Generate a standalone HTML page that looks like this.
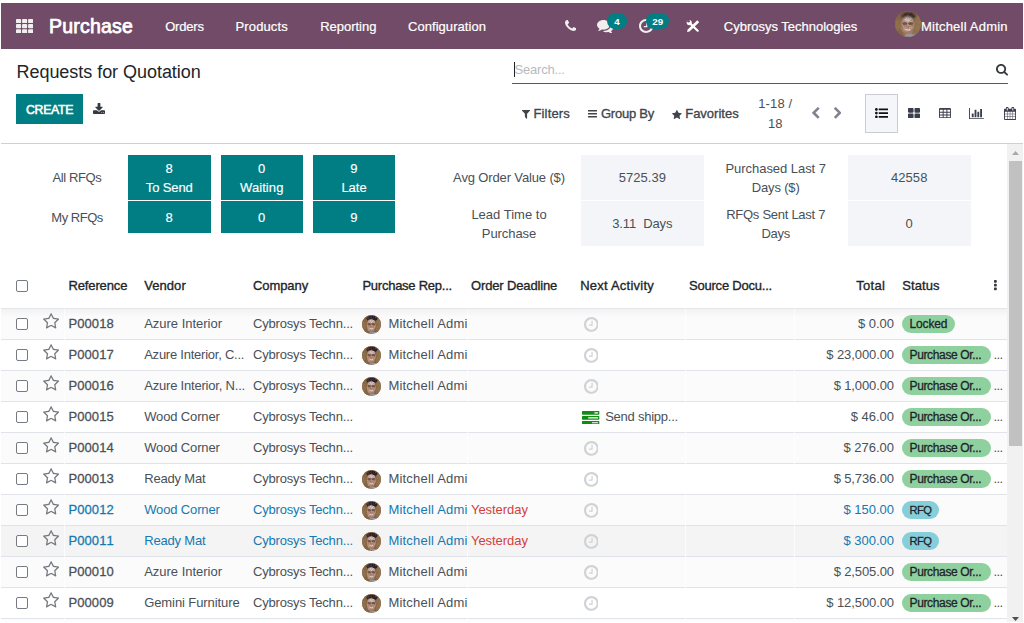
<!DOCTYPE html>
<html lang="en"><head><meta charset="utf-8"><title>Odoo - Requests for Quotation</title>
<style>

html,body{margin:0;padding:0;background:#fff;}
body{position:relative;width:1024px;height:623px;overflow:hidden;font-family:"Liberation Sans",sans-serif;font-size:13px;color:#495057;}
header,nav,main,section,article,aside{display:block;position:static;margin:0;padding:0;height:0;}
div,span,svg{position:absolute;display:block;}
span{white-space:pre;}

</style></head>
<body>
<header class="o_main_navbar">
<div style="left:1px;top:3px;width:1022px;height:46px;background:#714b67;"></div>
<svg style="left:16px;top:18.8px" width="17.2" height="14.3" viewBox="0 0 17.2 14.3" fill="#f1eef0"><rect x="0.00" y="0.00" width="5.1" height="4.1" rx="0.9"/><rect x="6.05" y="0.00" width="5.1" height="4.1" rx="0.9"/><rect x="12.10" y="0.00" width="5.1" height="4.1" rx="0.9"/><rect x="0.00" y="5.10" width="5.1" height="4.1" rx="0.9"/><rect x="6.05" y="5.10" width="5.1" height="4.1" rx="0.9"/><rect x="12.10" y="5.10" width="5.1" height="4.1" rx="0.9"/><rect x="0.00" y="10.20" width="5.1" height="4.1" rx="0.9"/><rect x="6.05" y="10.20" width="5.1" height="4.1" rx="0.9"/><rect x="12.10" y="10.20" width="5.1" height="4.1" rx="0.9"/></svg>
<span style="left:49.00px;top:13px;font-size:19.5px;line-height:26px;color:#fff;letter-spacing:0.217px;-webkit-text-stroke:0.75px;">Purchase</span>
<span style="left:165.20px;top:17px;font-size:13px;line-height:19px;color:#fff;letter-spacing:-0.193px;-webkit-text-stroke:0.2px;">Orders</span>
<span style="left:235.60px;top:17px;font-size:13px;line-height:19px;color:#fff;letter-spacing:0.107px;-webkit-text-stroke:0.2px;">Products</span>
<span style="left:320.20px;top:17px;font-size:13px;line-height:19px;color:#fff;letter-spacing:-0.016px;-webkit-text-stroke:0.2px;">Reporting</span>
<span style="left:408.00px;top:17px;font-size:13px;line-height:19px;color:#fff;letter-spacing:0.049px;-webkit-text-stroke:0.2px;">Configuration</span>
<svg style="left:564.8px;top:20.4px;" width="11.40" height="11.00" viewBox="0 -1408 1408 1408" preserveAspectRatio="none"><path transform="scale(1,-1)" fill="#f1eef0" d="M1408 296C1408 303 1408 310 1405 317C1398 338 1349 360 1329 370C1272 402 1214 433 1158 466C1132 482 1100 512 1069 512C1008 512 919 331 865 331C838 331 803 356 779 370C597 471 471 597 370 779C356 803 331 838 331 865C331 919 512 1008 512 1069C512 1100 482 1132 466 1158C433 1214 402 1272 370 1329C360 1349 338 1398 317 1405C310 1408 303 1408 296 1408C260 1408 190 1392 157 1377C108 1356 76 1300 51 1255C19 1196 0 1136 0 1069C0 976 38 892 69 807C91 746 118 687 152 632C257 462 462 257 632 152C687 118 746 91 807 69C892 38 976 0 1069 0C1136 0 1196 19 1255 51C1300 76 1356 108 1377 157C1392 190 1408 260 1408 296Z"/></svg>
<svg style="left:596.8px;top:19.8px;" width="16.40" height="13.40" viewBox="0 -1280 1792 1408" preserveAspectRatio="none"><path transform="scale(1,-1)" fill="#f1eef0" d="M1408 768C1408 1051 1093 1280 704 1280C315 1280 0 1051 0 768C0 606 104 461 266 367C232 284 188 245 149 201C138 188 125 176 129 157C129 157 129 157 129 157C132 140 146 128 161 128C162 128 163 128 164 128C194 132 223 137 250 144C351 170 445 213 528 272C584 262 643 256 704 256C1093 256 1408 485 1408 768ZM1792 512C1792 679 1682 827 1513 920C1528 871 1536 820 1536 768C1536 589 1444 424 1277 302C1122 190 919 128 704 128C675 128 645 130 616 132C741 50 907 0 1088 0C1149 0 1208 6 1264 16C1347 -43 1441 -86 1542 -112C1569 -119 1598 -124 1628 -128C1644 -130 1659 -117 1663 -99C1663 -99 1663 -99 1663 -99C1667 -80 1654 -68 1643 -55C1604 -11 1560 28 1526 111C1688 205 1792 349 1792 512Z"/></svg>
<div style="left:607px;top:13px;width:20px;height:16px;border-radius:8px;background:#017e84"></div>
<span style="left:614.25px;top:14px;font-size:9.75px;line-height:15px;color:#fff;letter-spacing:0.463px;font-weight:700;">4</span>
<svg style="left:638.8px;top:19.4px;" width="14.40" height="14.00" viewBox="0 -1408 1536 1536" preserveAspectRatio="none"><path transform="scale(1,-1)" fill="#f1eef0" d="M896 992C896 1010 882 1024 864 1024H800C782 1024 768 1010 768 992V640H544C526 640 512 626 512 608V544C512 526 526 512 544 512H864C882 512 896 526 896 544ZM1312 640C1312 340 1068 96 768 96C468 96 224 340 224 640C224 940 468 1184 768 1184C1068 1184 1312 940 1312 640ZM1536 640C1536 1064 1192 1408 768 1408C344 1408 0 1064 0 640C0 216 344 -128 768 -128C1192 -128 1536 216 1536 640Z"/></svg>
<div style="left:646.3px;top:13px;width:22.7px;height:16px;border-radius:8px;background:#017e84"></div>
<span style="left:652.30px;top:14px;font-size:9.75px;line-height:15px;color:#fff;letter-spacing:0.070px;font-weight:700;">29</span>
<svg style="left:686px;top:19px" width="14" height="14" viewBox="0 0 14 14"><path d="M3.7 4.1 L11.7 11.7" stroke="#fff" stroke-width="2.2" stroke-linecap="round" fill="none"/><circle cx="3.2" cy="3.6" r="2.55" fill="#fff"/><circle cx="2.5" cy="2.2" r="1.35" fill="#714b67"/><path d="M1.1 12.9 L1.7 10.6 L11.3 1.3 L13.2 3.2 L3.5 12.4 Z" fill="#fff"/></svg>
<span style="left:723.80px;top:17px;font-size:13px;line-height:19px;color:#fff;letter-spacing:-0.004px;-webkit-text-stroke:0.2px;">Cybrosys Technologies</span>
<svg style="left:895px;top:11px" width="26" height="26" viewBox="0 0 26 26"><defs><clipPath id="avn"><circle cx="13" cy="13" r="13"/></clipPath><filter id="favn" x="-30%" y="-30%" width="160%" height="160%"><feGaussianBlur stdDeviation="1"/></filter><filter id="gavn" x="-30%" y="-30%" width="160%" height="160%"><feGaussianBlur stdDeviation="0.5"/></filter><filter id="navn" x="0" y="0" width="100%" height="100%"><feTurbulence type="fractalNoise" baseFrequency="0.55" numOctaves="2" seed="7" result="t"/><feColorMatrix in="t" type="matrix" values="0 0 0 0 0.2  0 0 0 0 0.12  0 0 0 0 0.08  1.6 0 0 0 -0.62"/></filter></defs><g clip-path="url(#avn)"><rect width="26" height="26" fill="#86653f"/><g filter="url(#favn)"><rect x="-3" y="-3" width="32" height="32" fill="#86653f"/><rect x="19.5" y="3" width="9" height="20" fill="#977650"/><rect x="-2" y="9" width="7" height="10" fill="#94714b"/><ellipse cx="13.6" cy="5" rx="7.6" ry="4" fill="#241c26"/><ellipse cx="12.6" cy="14.4" rx="6.1" ry="9" fill="#c19987"/><ellipse cx="13" cy="8.8" rx="4.6" ry="2.2" fill="#d8c4be"/><ellipse cx="16" cy="26.5" rx="7" ry="3.4" fill="#9aa4b6"/></g><g filter="url(#gavn)"><ellipse cx="9.8" cy="12.6" rx="2.5" ry="1.5" fill="#5a3d33" opacity=".8"/><ellipse cx="15.6" cy="12.6" rx="2.5" ry="1.5" fill="#5a3d33" opacity=".8"/><ellipse cx="12.8" cy="16" rx="1.5" ry="1.5" fill="#b27355" opacity=".7"/><ellipse cx="12.8" cy="18.8" rx="2.6" ry="1" fill="#efe3de" opacity=".85"/><ellipse cx="12.8" cy="21.4" rx="3.2" ry="1.2" fill="#a87c68" opacity=".7"/></g><rect width="26" height="26" filter="url(#navn)"/></g></svg>
<span style="left:921.00px;top:17px;font-size:13px;line-height:19px;color:#fff;letter-spacing:0.209px;-webkit-text-stroke:0.2px;">Mitchell Admin</span>
</header>
<main class="o_action_manager">
<section class="o_control_panel">
<span style="left:16.50px;top:60px;font-size:18px;line-height:24px;color:#212529;letter-spacing:-0.041px;">Requests for Quotation</span>
<div style="left:16px;top:94px;width:67px;height:30px;background:#017e84;"></div>
<span style="left:26.00px;top:101px;font-size:12.3px;line-height:18px;color:#fff;letter-spacing:-0.310px;-webkit-text-stroke:0.55px;">CREATE</span>
<svg style="left:93px;top:103px;" width="12.00" height="11.00" viewBox="0 -1536 1664 1536" preserveAspectRatio="none"><path transform="scale(1,-1)" fill="#343a40" d="M1280 192C1280 157 1251 128 1216 128C1181 128 1152 157 1152 192C1152 227 1181 256 1216 256C1251 256 1280 227 1280 192ZM1536 192C1536 157 1507 128 1472 128C1437 128 1408 157 1408 192C1408 227 1437 256 1472 256C1507 256 1536 227 1536 192ZM1664 416C1664 469 1621 512 1568 512H1104L968 376C931 340 883 320 832 320C781 320 733 340 696 376L561 512H96C43 512 0 469 0 416V96C0 43 43 0 96 0H1568C1621 0 1664 43 1664 96ZM1339 985C1329 1008 1306 1024 1280 1024H1024V1472C1024 1507 995 1536 960 1536H704C669 1536 640 1507 640 1472V1024H384C358 1024 335 1008 325 985C315 961 320 933 339 915L787 467C799 454 816 448 832 448C848 448 865 454 877 467L1325 915C1344 933 1349 961 1339 985Z"/></svg>
<span style="left:514.50px;top:60px;font-size:13px;line-height:19px;color:#b6babe;letter-spacing:-0.203px;">Search...</span>
<div style="left:514px;top:62px;width:1px;height:15px;background:#222;"></div>
<div style="left:512px;top:83px;width:496px;height:1px;background:#017e84;"></div>
<svg style="left:996px;top:64.2px;" width="12.00" height="11.60" viewBox="0 -1408 1664 1664" preserveAspectRatio="none"><path transform="scale(1,-1)" fill="#343a40" d="M1152 704C1152 457 951 256 704 256C457 256 256 457 256 704C256 951 457 1152 704 1152C951 1152 1152 951 1152 704ZM1664 -128C1664 -94 1650 -61 1627 -38L1284 305C1365 422 1408 562 1408 704C1408 1093 1093 1408 704 1408C315 1408 0 1093 0 704C0 315 315 0 704 0C846 0 986 43 1103 124L1446 -218C1469 -242 1502 -256 1536 -256C1606 -256 1664 -198 1664 -128Z"/></svg>
<svg style="left:522px;top:110px;" width="8.00" height="8.80" viewBox="-0 -1280 1408 1408" preserveAspectRatio="none"><path transform="scale(1,-1)" fill="#40454c" d="M1403 1241C1393 1264 1370 1280 1344 1280H64C38 1280 15 1264 5 1241C-5 1217 0 1189 19 1171L512 678V192C512 175 519 159 531 147L787 -109C799 -122 815 -128 832 -128C840 -128 849 -126 857 -123C880 -113 896 -90 896 -64V678L1389 1171C1408 1189 1413 1217 1403 1241Z"/></svg>
<span style="left:533.50px;top:104px;font-size:13px;line-height:19px;color:#40454c;letter-spacing:0.141px;-webkit-text-stroke:0.33px;">Filters</span>
<svg style="left:588.2px;top:110.2px;" width="9.00" height="7.50" viewBox="0 -1280 1536 1280" preserveAspectRatio="none"><path transform="scale(1,-1)" fill="#40454c" d="M1536 192C1536 227 1507 256 1472 256H64C29 256 0 227 0 192V64C0 29 29 0 64 0H1472C1507 0 1536 29 1536 64ZM1536 704C1536 739 1507 768 1472 768H64C29 768 0 739 0 704V576C0 541 29 512 64 512H1472C1507 512 1536 541 1536 576ZM1536 1216C1536 1251 1507 1280 1472 1280H64C29 1280 0 1251 0 1216V1088C0 1053 29 1024 64 1024H1472C1507 1024 1536 1053 1536 1088Z"/></svg>
<span style="left:601.00px;top:104px;font-size:13px;line-height:19px;color:#40454c;letter-spacing:-0.238px;-webkit-text-stroke:0.33px;">Group By</span>
<svg style="left:672px;top:109.6px;" width="9.80" height="9.00" viewBox="0 -1504 1664 1587" preserveAspectRatio="none"><path transform="scale(1,-1)" fill="#40454c" d="M1664 889C1664 919 1632 931 1608 935L1106 1008L881 1463C872 1482 855 1504 832 1504C809 1504 792 1482 783 1463L558 1008L56 935C31 931 0 919 0 889C0 871 13 854 25 841L389 487L303 -13C302 -20 301 -26 301 -33C301 -59 314 -83 343 -83C357 -83 370 -78 383 -71L832 165L1281 -71C1293 -78 1307 -83 1321 -83C1350 -83 1362 -59 1362 -33C1362 -26 1362 -20 1361 -13L1275 487L1638 841C1651 854 1664 871 1664 889Z"/></svg>
<span style="left:685.20px;top:104px;font-size:13px;line-height:19px;color:#40454c;letter-spacing:0.002px;-webkit-text-stroke:0.33px;">Favorites</span>
<span style="left:758.25px;top:94px;font-size:13px;line-height:19px;color:#495057;letter-spacing:0.143px;">1-18 /</span>
<span style="left:767.89px;top:114px;font-size:13px;line-height:19px;color:#495057;letter-spacing:0.078px;">18</span>
<svg style="left:812.32px;top:107.05px;" width="7.51" height="11.69" viewBox="154 -1510 1036 1612" preserveAspectRatio="none"><path transform="scale(1,-1)" fill="#7f8390" d="M1171 1235C1196 1260 1196 1300 1171 1325L1005 1491C980 1516 940 1516 915 1491L173 749C148 724 148 684 173 659L915 -83C940 -108 980 -108 1005 -83L1171 83C1196 108 1196 148 1171 173L640 704L1171 1235Z"/></svg>
<svg style="left:833.85px;top:107.05px;" width="7.52" height="11.69" viewBox="90 -1510 1036 1612" preserveAspectRatio="none"><path transform="scale(1,-1)" fill="#7f8390" d="M1107 659C1132 684 1132 724 1107 749L365 1491C340 1516 300 1516 275 1491L109 1325C84 1300 84 1260 109 1235L640 704L109 173C84 148 84 108 109 83L275 -83C300 -108 340 -108 365 -83L1107 659Z"/></svg>
<div style="left:865px;top:94px;width:32.6px;height:38.6px;box-sizing:border-box;background:#f5f6fa;border:1px solid #c9ccd2"></div>
<svg style="left:875.2px;top:108.05px;" width="13.00" height="10.21" viewBox="0 -1344 1792 1408" preserveAspectRatio="none"><path transform="scale(1,-1)" fill="#111" d="M384 128C384 234 298 320 192 320C86 320 0 234 0 128C0 22 86 -64 192 -64C298 -64 384 22 384 128ZM384 640C384 746 298 832 192 832C86 832 0 746 0 640C0 534 86 448 192 448C298 448 384 534 384 640ZM1792 224C1792 241 1777 256 1760 256H544C527 256 512 241 512 224V32C512 15 527 0 544 0H1760C1777 0 1792 15 1792 32ZM384 1152C384 1258 298 1344 192 1344C86 1344 0 1258 0 1152C0 1046 86 960 192 960C298 960 384 1046 384 1152ZM1792 736C1792 753 1777 768 1760 768H544C527 768 512 753 512 736V544C512 527 527 512 544 512H1760C1777 512 1792 527 1792 544ZM1792 1248C1792 1265 1777 1280 1760 1280H544C527 1280 512 1265 512 1248V1056C512 1039 527 1024 544 1024H1760C1777 1024 1792 1039 1792 1056Z"/></svg>
<svg style="left:907.5px;top:107.79px;" width="12.07" height="10.21" viewBox="0 -1408 1664 1408" preserveAspectRatio="none"><path transform="scale(1,-1)" fill="#3b3f4c" d="M768 512C768 582 710 640 640 640H128C58 640 0 582 0 512V128C0 58 58 0 128 0H640C710 0 768 58 768 128ZM768 1280C768 1350 710 1408 640 1408H128C58 1408 0 1350 0 1280V896C0 826 58 768 128 768H640C710 768 768 826 768 896ZM1664 512C1664 582 1606 640 1536 640H1024C954 640 896 582 896 512V128C896 58 954 0 1024 0H1536C1606 0 1664 58 1664 128ZM1664 1280C1664 1350 1606 1408 1536 1408H1024C954 1408 896 1350 896 1280V896C896 826 954 768 1024 768H1536C1606 768 1664 826 1664 896Z"/></svg>
<svg style="left:938.6px;top:107.79px;" width="12.07" height="10.21" viewBox="0 -1408 1664 1408" preserveAspectRatio="none"><path transform="scale(1,-1)" fill="#3b3f4c" d="M512 160C512 142 498 128 480 128H160C142 128 128 142 128 160V352C128 370 142 384 160 384H480C498 384 512 370 512 352V160ZM512 544C512 526 498 512 480 512H160C142 512 128 526 128 544V736C128 754 142 768 160 768H480C498 768 512 754 512 736V544ZM1024 160C1024 142 1010 128 992 128H672C654 128 640 142 640 160V352C640 370 654 384 672 384H992C1010 384 1024 370 1024 352V160ZM512 928C512 910 498 896 480 896H160C142 896 128 910 128 928V1120C128 1138 142 1152 160 1152H480C498 1152 512 1138 512 1120V928ZM1024 544C1024 526 1010 512 992 512H672C654 512 640 526 640 544V736C640 754 654 768 672 768H992C1010 768 1024 754 1024 736V544ZM1536 160C1536 142 1522 128 1504 128H1184C1166 128 1152 142 1152 160V352C1152 370 1166 384 1184 384H1504C1522 384 1536 370 1536 352V160ZM1024 928C1024 910 1010 896 992 896H672C654 896 640 910 640 928V1120C640 1138 654 1152 672 1152H992C1010 1152 1024 1138 1024 1120V928ZM1536 544C1536 526 1522 512 1504 512H1184C1166 512 1152 526 1152 544V736C1152 754 1166 768 1184 768H1504C1522 768 1536 754 1536 736V544ZM1536 928C1536 910 1522 896 1504 896H1184C1166 896 1152 910 1152 928V1120C1152 1138 1166 1152 1184 1152H1504C1522 1152 1536 1138 1536 1120V928ZM1664 1248C1664 1336 1592 1408 1504 1408H160C72 1408 0 1336 0 1248V160C0 72 72 0 160 0H1504C1592 0 1664 72 1664 160Z"/></svg>
<svg style="left:969px;top:107.79px;" width="14.86" height="11.14" viewBox="0 -1408 2048 1536" preserveAspectRatio="none"><path transform="scale(1,-1)" fill="#3b3f4c" d="M640 640H384V128H640ZM1024 1152H768V128H1024ZM2048 0H128V1408H0V-128H2048ZM1408 896H1152V128H1408ZM1792 1280H1536V128H1792Z"/></svg>
<svg style="left:1003.6px;top:106.96px;" width="12.07" height="13.00" viewBox="0 -1536 1664 1792" preserveAspectRatio="none"><path transform="scale(1,-1)" fill="#3b3f4c" d="M128 -128V160H416V-128ZM480 -128V160H800V-128ZM128 224V544H416V224ZM480 224V544H800V224ZM128 608V896H416V608ZM864 -128V160H1184V-128ZM480 608V896H800V608ZM1248 -128V160H1536V-128ZM864 224V544H1184V224ZM512 1088C512 1071 497 1056 480 1056H416C399 1056 384 1071 384 1088V1376C384 1393 399 1408 416 1408H480C497 1408 512 1393 512 1376V1088ZM1248 224V544H1536V224ZM864 608V896H1184V608ZM1248 608V896H1536V608ZM1280 1088C1280 1071 1265 1056 1248 1056H1184C1167 1056 1152 1071 1152 1088V1376C1152 1393 1167 1408 1184 1408H1248C1265 1408 1280 1393 1280 1376V1088ZM1664 1152C1664 1222 1606 1280 1536 1280H1408V1376C1408 1464 1336 1536 1248 1536H1184C1096 1536 1024 1464 1024 1376V1280H640V1376C640 1464 568 1536 480 1536H416C328 1536 256 1464 256 1376V1280H128C58 1280 0 1222 0 1152V-128C0 -198 58 -256 128 -256H1536C1606 -256 1664 -198 1664 -128Z"/></svg>
<div style="left:1px;top:143px;width:1022px;height:1px;background:#cfd1da;"></div>
</section>
<section class="o_purchase_dashboard">
<div style="left:128px;top:155px;width:82.5px;height:45px;background:#017e84;"></div>
<div style="left:128px;top:201px;width:82.5px;height:32px;background:#017e84;"></div>
<span style="left:165.59px;top:159px;font-size:13px;line-height:19px;color:#fff;letter-spacing:0.078px;-webkit-text-stroke:0.15px;">8</span>
<span style="left:145.80px;top:178px;font-size:13px;line-height:19px;color:#fff;letter-spacing:-0.116px;-webkit-text-stroke:0.15px;">To Send</span>
<span style="left:165.59px;top:208px;font-size:13px;line-height:19px;color:#fff;letter-spacing:0.078px;-webkit-text-stroke:0.15px;">8</span>
<div style="left:220.5px;top:155px;width:82.5px;height:45px;background:#017e84;"></div>
<div style="left:220.5px;top:201px;width:82.5px;height:32px;background:#017e84;"></div>
<span style="left:258.09px;top:159px;font-size:13px;line-height:19px;color:#fff;letter-spacing:0.078px;-webkit-text-stroke:0.15px;">0</span>
<span style="left:240.02px;top:178px;font-size:13px;line-height:19px;color:#fff;letter-spacing:0.083px;-webkit-text-stroke:0.15px;">Waiting</span>
<span style="left:258.09px;top:208px;font-size:13px;line-height:19px;color:#fff;letter-spacing:0.078px;-webkit-text-stroke:0.15px;">0</span>
<div style="left:313px;top:155px;width:82px;height:45px;background:#017e84;"></div>
<div style="left:313px;top:201px;width:82px;height:32px;background:#017e84;"></div>
<span style="left:350.34px;top:159px;font-size:13px;line-height:19px;color:#fff;letter-spacing:0.078px;-webkit-text-stroke:0.15px;">9</span>
<span style="left:341.38px;top:178px;font-size:13px;line-height:19px;color:#fff;letter-spacing:-0.020px;-webkit-text-stroke:0.15px;">Late</span>
<span style="left:350.34px;top:208px;font-size:13px;line-height:19px;color:#fff;letter-spacing:0.078px;-webkit-text-stroke:0.15px;">9</span>
<span style="left:52.55px;top:168px;font-size:13px;line-height:19px;color:#495057;letter-spacing:-0.389px;">All RFQs</span>
<span style="left:51.31px;top:208px;font-size:13px;line-height:19px;color:#495057;letter-spacing:-0.473px;">My RFQs</span>
<div style="left:581px;top:155px;width:122.5px;height:45px;background:#f4f5f9;"></div>
<div style="left:581px;top:201px;width:122.5px;height:45px;background:#f4f5f9;"></div>
<div style="left:848px;top:155px;width:122.5px;height:45px;background:#f4f5f9;"></div>
<div style="left:848px;top:201px;width:122.5px;height:45px;background:#f4f5f9;"></div>
<span style="left:453.11px;top:168px;font-size:13px;line-height:19px;color:#495057;letter-spacing:-0.138px;">Avg Order Value ($)</span>
<span style="left:471.38px;top:205px;font-size:13px;line-height:19px;color:#495057;letter-spacing:0.008px;">Lead Time to</span>
<span style="left:481.85px;top:224px;font-size:13px;line-height:19px;color:#495057;letter-spacing:-0.078px;">Purchase</span>
<span style="left:618.67px;top:168px;font-size:13px;line-height:19px;color:#495057;letter-spacing:0.038px;">5725.39</span>
<span style="left:612.21px;top:214px;font-size:13px;line-height:19px;color:#495057;letter-spacing:-0.102px;">3.11  Days</span>
<span style="left:725.49px;top:159px;font-size:13px;line-height:19px;color:#495057;letter-spacing:-0.048px;">Purchased Last 7</span>
<span style="left:751.76px;top:178px;font-size:13px;line-height:19px;color:#495057;letter-spacing:-0.156px;">Days ($)</span>
<span style="left:726.24px;top:205px;font-size:13px;line-height:19px;color:#495057;letter-spacing:-0.275px;">RFQs Sent Last 7</span>
<span style="left:761.51px;top:224px;font-size:13px;line-height:19px;color:#495057;letter-spacing:-0.312px;">Days</span>
<span style="left:890.93px;top:168px;font-size:13px;line-height:19px;color:#495057;letter-spacing:0.075px;">42558</span>
<span style="left:905.54px;top:214px;font-size:13px;line-height:19px;color:#495057;letter-spacing:0.078px;">0</span>
</section>
<section class="o_list_view" role="table">
<article class="o_list_header" role="row">
<div style="left:16px;top:280px;width:12px;height:12px;box-sizing:border-box;border:1px solid #767a83;border-radius:2px;background:#fff"></div>
<span style="left:68.40px;top:276px;font-size:13px;line-height:19px;color:#212529;letter-spacing:-0.111px;-webkit-text-stroke:0.33px;">Reference</span>
<span style="left:144.20px;top:276px;font-size:13px;line-height:19px;color:#212529;letter-spacing:0.068px;-webkit-text-stroke:0.33px;">Vendor</span>
<span style="left:253.00px;top:276px;font-size:13px;line-height:19px;color:#212529;letter-spacing:-0.076px;-webkit-text-stroke:0.33px;">Company</span>
<span style="left:362.40px;top:276px;font-size:13px;line-height:19px;color:#212529;letter-spacing:-0.244px;-webkit-text-stroke:0.33px;">Purchase Rep...</span>
<span style="left:471.00px;top:276px;font-size:13px;line-height:19px;color:#212529;letter-spacing:-0.142px;-webkit-text-stroke:0.33px;">Order Deadline</span>
<span style="left:580.20px;top:276px;font-size:13px;line-height:19px;color:#212529;letter-spacing:0.231px;-webkit-text-stroke:0.33px;">Next Activity</span>
<span style="left:689.00px;top:276px;font-size:13px;line-height:19px;color:#212529;letter-spacing:-0.213px;-webkit-text-stroke:0.33px;">Source Docu...</span>
<span style="left:902.20px;top:276px;font-size:13px;line-height:19px;color:#212529;letter-spacing:0.102px;-webkit-text-stroke:0.33px;">Status</span>
<span style="left:856.22px;top:276px;font-size:13px;line-height:19px;color:#212529;letter-spacing:0.322px;-webkit-text-stroke:0.33px;">Total</span>
<svg style="left:993.8px;top:280.39px;" width="2.79" height="10.21" viewBox="0 -1408 384 1408" preserveAspectRatio="none"><path transform="scale(1,-1)" fill="#343a40" d="M384 288C384 341 341 384 288 384H96C43 384 0 341 0 288V96C0 43 43 0 96 0H288C341 0 384 43 384 96ZM384 800C384 853 341 896 288 896H96C43 896 0 853 0 800V608C0 555 43 512 96 512H288C341 512 384 555 384 608ZM384 1312C384 1365 341 1408 288 1408H96C43 1408 0 1365 0 1312V1120C0 1067 43 1024 96 1024H288C341 1024 384 1067 384 1120Z"/></svg>
</article>
<div style="left:1px;top:308px;width:1006px;height:31px;background:#fbfbfb;"></div>
<div style="left:1px;top:370px;width:1006px;height:31px;background:#fbfbfb;"></div>
<div style="left:1px;top:432px;width:1006px;height:31px;background:#fbfbfb;"></div>
<div style="left:1px;top:494px;width:1006px;height:31px;background:#fbfbfb;"></div>
<div style="left:1px;top:525px;width:1006px;height:31px;background:#f4f4f4;"></div>
<div style="left:1px;top:556px;width:1006px;height:31px;background:#fbfbfb;"></div>
<div style="left:1px;top:618px;width:1006px;height:4px;background:#fcfcfc;"></div>
<div style="left:1px;top:309px;width:1006px;height:8px;background:linear-gradient(#f2f2f3,#f5f5f6 40%,rgba(251,251,251,0))"></div>
<div style="left:1px;top:308px;width:1006px;height:1px;background:#e3e5e9;"></div>
<div style="left:1px;top:339px;width:1006px;height:1px;background:#e0e3e8;"></div>
<div style="left:1px;top:370px;width:1006px;height:1px;background:#e0e3e8;"></div>
<div style="left:1px;top:401px;width:1006px;height:1px;background:#e0e3e8;"></div>
<div style="left:1px;top:432px;width:1006px;height:1px;background:#e0e3e8;"></div>
<div style="left:1px;top:463px;width:1006px;height:1px;background:#e0e3e8;"></div>
<div style="left:1px;top:494px;width:1006px;height:1px;background:#e0e3e8;"></div>
<div style="left:1px;top:525px;width:1006px;height:1px;background:#e0e3e8;"></div>
<div style="left:1px;top:556px;width:1006px;height:1px;background:#e0e3e8;"></div>
<div style="left:1px;top:587px;width:1006px;height:1px;background:#e0e3e8;"></div>
<div style="left:1px;top:618px;width:1006px;height:1px;background:#e0e3e8;"></div>
<div style="left:64px;top:309px;width:1px;height:313px;background:rgba(255,255,255,.75);"></div>
<div style="left:467px;top:309px;width:1px;height:313px;background:rgba(255,255,255,.75);"></div>
<div style="left:684.5px;top:309px;width:1.0px;height:313px;background:rgba(255,255,255,.75);"></div>
<div style="left:794px;top:309px;width:1px;height:313px;background:rgba(255,255,255,.75);"></div>
<article class="o_data_row" role="row">
<div style="left:16px;top:318px;width:12px;height:12px;box-sizing:border-box;border:1px solid #767a83;border-radius:2px;background:#fff"></div>
<svg style="left:43.2px;top:313.01px;" width="16.25" height="15.50" viewBox="0 -1504 1664 1587" preserveAspectRatio="none"><path transform="scale(1,-1)" fill="#74787f" d="M1137 532 1209 111 832 310 454 111 527 532 221 829 643 891 832 1273 1021 891 1443 829ZM1664 889C1664 919 1632 931 1608 935L1106 1008L881 1463C872 1482 855 1504 832 1504C809 1504 792 1482 783 1463L558 1008L56 935C31 931 0 919 0 889C0 871 13 854 25 841L389 487L303 -13C302 -20 301 -26 301 -33C301 -59 314 -83 343 -83C357 -83 370 -78 383 -71L832 165L1281 -71C1293 -78 1307 -83 1321 -83C1350 -83 1362 -60 1362 -33C1362 -26 1362 -20 1361 -13L1275 487L1638 841C1651 854 1664 871 1664 889Z"/></svg>
<span style="left:68.50px;top:314px;font-size:13px;line-height:19px;color:#495057;letter-spacing:0.070px;-webkit-text-stroke:0.28px;font-kerning:none;">P00018</span>
<span style="left:144.20px;top:314px;font-size:13px;line-height:19px;color:#495057;letter-spacing:-0.016px;">Azure Interior</span>
<span style="left:253.00px;top:314px;font-size:13px;line-height:19px;color:#495057;letter-spacing:-0.181px;">Cybrosys Techn...</span>
<svg style="left:361.7px;top:314.6px" width="19" height="19" viewBox="0 0 26 26"><defs><clipPath id="av0"><circle cx="13" cy="13" r="13"/></clipPath><filter id="fav0" x="-30%" y="-30%" width="160%" height="160%"><feGaussianBlur stdDeviation="1"/></filter><filter id="gav0" x="-30%" y="-30%" width="160%" height="160%"><feGaussianBlur stdDeviation="0.5"/></filter><filter id="nav0" x="0" y="0" width="100%" height="100%"><feTurbulence type="fractalNoise" baseFrequency="0.55" numOctaves="2" seed="7" result="t"/><feColorMatrix in="t" type="matrix" values="0 0 0 0 0.2  0 0 0 0 0.12  0 0 0 0 0.08  1.6 0 0 0 -0.62"/></filter></defs><g clip-path="url(#av0)"><rect width="26" height="26" fill="#86653f"/><g filter="url(#fav0)"><rect x="-3" y="-3" width="32" height="32" fill="#86653f"/><rect x="19.5" y="3" width="9" height="20" fill="#977650"/><rect x="-2" y="9" width="7" height="10" fill="#94714b"/><ellipse cx="13.6" cy="5" rx="7.6" ry="4" fill="#241c26"/><ellipse cx="12.6" cy="14.4" rx="6.1" ry="9" fill="#c19987"/><ellipse cx="13" cy="8.8" rx="4.6" ry="2.2" fill="#d8c4be"/><ellipse cx="16" cy="26.5" rx="7" ry="3.4" fill="#9aa4b6"/></g><g filter="url(#gav0)"><ellipse cx="9.8" cy="12.6" rx="2.5" ry="1.5" fill="#5a3d33" opacity=".8"/><ellipse cx="15.6" cy="12.6" rx="2.5" ry="1.5" fill="#5a3d33" opacity=".8"/><ellipse cx="12.8" cy="16" rx="1.5" ry="1.5" fill="#b27355" opacity=".7"/><ellipse cx="12.8" cy="18.8" rx="2.6" ry="1" fill="#efe3de" opacity=".85"/><ellipse cx="12.8" cy="21.4" rx="3.2" ry="1.2" fill="#a87c68" opacity=".7"/></g><rect width="26" height="26" filter="url(#nav0)"/></g></svg>
<span style="left:388.40px;top:314px;font-size:13px;line-height:19px;color:#495057;letter-spacing:0.209px;width:78.3px;overflow:hidden;">Mitchell Admin</span>
<svg style="left:583.6px;top:317.48px;" width="14.85" height="14.86" viewBox="0 -1408 1536 1536" preserveAspectRatio="none"><path transform="scale(1,-1)" fill="#d1d2d6" d="M896 992C896 1010 882 1024 864 1024H800C782 1024 768 1010 768 992V640H544C526 640 512 626 512 608V544C512 526 526 512 544 512H864C882 512 896 526 896 544ZM1312 640C1312 340 1068 96 768 96C468 96 224 340 224 640C224 940 468 1184 768 1184C1068 1184 1312 940 1312 640ZM1536 640C1536 1064 1192 1408 768 1408C344 1408 0 1064 0 640C0 216 344 -128 768 -128C1192 -128 1536 216 1536 640Z"/></svg>
<span style="left:858.11px;top:314px;font-size:13px;line-height:19px;color:#495057;letter-spacing:-0.044px;">$ 0.00</span>
<div style="left:901.7px;top:315.2px;width:53.3px;height:17.6px;border-radius:9px;background:#8fd19e"></div>
<span style="left:909.50px;top:315px;font-size:12px;line-height:18px;color:#1f2429;letter-spacing:-0.138px;-webkit-text-stroke:0.3px;">Locked</span>
</article>
<article class="o_data_row" role="row">
<div style="left:16px;top:349px;width:12px;height:12px;box-sizing:border-box;border:1px solid #767a83;border-radius:2px;background:#fff"></div>
<svg style="left:43.2px;top:344.01px;" width="16.25" height="15.50" viewBox="0 -1504 1664 1587" preserveAspectRatio="none"><path transform="scale(1,-1)" fill="#74787f" d="M1137 532 1209 111 832 310 454 111 527 532 221 829 643 891 832 1273 1021 891 1443 829ZM1664 889C1664 919 1632 931 1608 935L1106 1008L881 1463C872 1482 855 1504 832 1504C809 1504 792 1482 783 1463L558 1008L56 935C31 931 0 919 0 889C0 871 13 854 25 841L389 487L303 -13C302 -20 301 -26 301 -33C301 -59 314 -83 343 -83C357 -83 370 -78 383 -71L832 165L1281 -71C1293 -78 1307 -83 1321 -83C1350 -83 1362 -60 1362 -33C1362 -26 1362 -20 1361 -13L1275 487L1638 841C1651 854 1664 871 1664 889Z"/></svg>
<span style="left:68.50px;top:345px;font-size:13px;line-height:19px;color:#495057;letter-spacing:0.070px;-webkit-text-stroke:0.28px;font-kerning:none;">P00017</span>
<span style="left:144.20px;top:345px;font-size:13px;line-height:19px;color:#495057;letter-spacing:-0.239px;">Azure Interior, C...</span>
<span style="left:253.00px;top:345px;font-size:13px;line-height:19px;color:#495057;letter-spacing:-0.181px;">Cybrosys Techn...</span>
<svg style="left:361.7px;top:345.6px" width="19" height="19" viewBox="0 0 26 26"><defs><clipPath id="av1"><circle cx="13" cy="13" r="13"/></clipPath><filter id="fav1" x="-30%" y="-30%" width="160%" height="160%"><feGaussianBlur stdDeviation="1"/></filter><filter id="gav1" x="-30%" y="-30%" width="160%" height="160%"><feGaussianBlur stdDeviation="0.5"/></filter><filter id="nav1" x="0" y="0" width="100%" height="100%"><feTurbulence type="fractalNoise" baseFrequency="0.55" numOctaves="2" seed="7" result="t"/><feColorMatrix in="t" type="matrix" values="0 0 0 0 0.2  0 0 0 0 0.12  0 0 0 0 0.08  1.6 0 0 0 -0.62"/></filter></defs><g clip-path="url(#av1)"><rect width="26" height="26" fill="#86653f"/><g filter="url(#fav1)"><rect x="-3" y="-3" width="32" height="32" fill="#86653f"/><rect x="19.5" y="3" width="9" height="20" fill="#977650"/><rect x="-2" y="9" width="7" height="10" fill="#94714b"/><ellipse cx="13.6" cy="5" rx="7.6" ry="4" fill="#241c26"/><ellipse cx="12.6" cy="14.4" rx="6.1" ry="9" fill="#c19987"/><ellipse cx="13" cy="8.8" rx="4.6" ry="2.2" fill="#d8c4be"/><ellipse cx="16" cy="26.5" rx="7" ry="3.4" fill="#9aa4b6"/></g><g filter="url(#gav1)"><ellipse cx="9.8" cy="12.6" rx="2.5" ry="1.5" fill="#5a3d33" opacity=".8"/><ellipse cx="15.6" cy="12.6" rx="2.5" ry="1.5" fill="#5a3d33" opacity=".8"/><ellipse cx="12.8" cy="16" rx="1.5" ry="1.5" fill="#b27355" opacity=".7"/><ellipse cx="12.8" cy="18.8" rx="2.6" ry="1" fill="#efe3de" opacity=".85"/><ellipse cx="12.8" cy="21.4" rx="3.2" ry="1.2" fill="#a87c68" opacity=".7"/></g><rect width="26" height="26" filter="url(#nav1)"/></g></svg>
<span style="left:388.40px;top:345px;font-size:13px;line-height:19px;color:#495057;letter-spacing:0.209px;width:78.3px;overflow:hidden;">Mitchell Admin</span>
<svg style="left:583.6px;top:348.48px;" width="14.85" height="14.86" viewBox="0 -1408 1536 1536" preserveAspectRatio="none"><path transform="scale(1,-1)" fill="#d1d2d6" d="M896 992C896 1010 882 1024 864 1024H800C782 1024 768 1010 768 992V640H544C526 640 512 626 512 608V544C512 526 526 512 544 512H864C882 512 896 526 896 544ZM1312 640C1312 340 1068 96 768 96C468 96 224 340 224 640C224 940 468 1184 768 1184C1068 1184 1312 940 1312 640ZM1536 640C1536 1064 1192 1408 768 1408C344 1408 0 1064 0 640C0 216 344 -128 768 -128C1192 -128 1536 216 1536 640Z"/></svg>
<span style="left:826.33px;top:345px;font-size:13px;line-height:19px;color:#495057;letter-spacing:-0.092px;">$ 23,000.00</span>
<div style="left:901.7px;top:346.2px;width:89.3px;height:17.6px;border-radius:9px;background:#8fd19e"></div>
<span style="left:909.50px;top:346px;font-size:12px;line-height:18px;color:#1f2429;letter-spacing:-0.356px;-webkit-text-stroke:0.3px;">Purchase Or...</span>
<span style="left:993.60px;top:345px;font-size:13px;line-height:19px;color:#495057;letter-spacing:-0.714px;">...</span>
</article>
<article class="o_data_row" role="row">
<div style="left:16px;top:380px;width:12px;height:12px;box-sizing:border-box;border:1px solid #767a83;border-radius:2px;background:#fff"></div>
<svg style="left:43.2px;top:375.01px;" width="16.25" height="15.50" viewBox="0 -1504 1664 1587" preserveAspectRatio="none"><path transform="scale(1,-1)" fill="#74787f" d="M1137 532 1209 111 832 310 454 111 527 532 221 829 643 891 832 1273 1021 891 1443 829ZM1664 889C1664 919 1632 931 1608 935L1106 1008L881 1463C872 1482 855 1504 832 1504C809 1504 792 1482 783 1463L558 1008L56 935C31 931 0 919 0 889C0 871 13 854 25 841L389 487L303 -13C302 -20 301 -26 301 -33C301 -59 314 -83 343 -83C357 -83 370 -78 383 -71L832 165L1281 -71C1293 -78 1307 -83 1321 -83C1350 -83 1362 -60 1362 -33C1362 -26 1362 -20 1361 -13L1275 487L1638 841C1651 854 1664 871 1664 889Z"/></svg>
<span style="left:68.50px;top:376px;font-size:13px;line-height:19px;color:#495057;letter-spacing:0.070px;-webkit-text-stroke:0.28px;font-kerning:none;">P00016</span>
<span style="left:144.20px;top:376px;font-size:13px;line-height:19px;color:#495057;letter-spacing:-0.198px;">Azure Interior, N...</span>
<span style="left:253.00px;top:376px;font-size:13px;line-height:19px;color:#495057;letter-spacing:-0.181px;">Cybrosys Techn...</span>
<svg style="left:361.7px;top:376.6px" width="19" height="19" viewBox="0 0 26 26"><defs><clipPath id="av2"><circle cx="13" cy="13" r="13"/></clipPath><filter id="fav2" x="-30%" y="-30%" width="160%" height="160%"><feGaussianBlur stdDeviation="1"/></filter><filter id="gav2" x="-30%" y="-30%" width="160%" height="160%"><feGaussianBlur stdDeviation="0.5"/></filter><filter id="nav2" x="0" y="0" width="100%" height="100%"><feTurbulence type="fractalNoise" baseFrequency="0.55" numOctaves="2" seed="7" result="t"/><feColorMatrix in="t" type="matrix" values="0 0 0 0 0.2  0 0 0 0 0.12  0 0 0 0 0.08  1.6 0 0 0 -0.62"/></filter></defs><g clip-path="url(#av2)"><rect width="26" height="26" fill="#86653f"/><g filter="url(#fav2)"><rect x="-3" y="-3" width="32" height="32" fill="#86653f"/><rect x="19.5" y="3" width="9" height="20" fill="#977650"/><rect x="-2" y="9" width="7" height="10" fill="#94714b"/><ellipse cx="13.6" cy="5" rx="7.6" ry="4" fill="#241c26"/><ellipse cx="12.6" cy="14.4" rx="6.1" ry="9" fill="#c19987"/><ellipse cx="13" cy="8.8" rx="4.6" ry="2.2" fill="#d8c4be"/><ellipse cx="16" cy="26.5" rx="7" ry="3.4" fill="#9aa4b6"/></g><g filter="url(#gav2)"><ellipse cx="9.8" cy="12.6" rx="2.5" ry="1.5" fill="#5a3d33" opacity=".8"/><ellipse cx="15.6" cy="12.6" rx="2.5" ry="1.5" fill="#5a3d33" opacity=".8"/><ellipse cx="12.8" cy="16" rx="1.5" ry="1.5" fill="#b27355" opacity=".7"/><ellipse cx="12.8" cy="18.8" rx="2.6" ry="1" fill="#efe3de" opacity=".85"/><ellipse cx="12.8" cy="21.4" rx="3.2" ry="1.2" fill="#a87c68" opacity=".7"/></g><rect width="26" height="26" filter="url(#nav2)"/></g></svg>
<span style="left:388.40px;top:376px;font-size:13px;line-height:19px;color:#495057;letter-spacing:0.209px;width:78.3px;overflow:hidden;">Mitchell Admin</span>
<svg style="left:583.6px;top:379.48px;" width="14.85" height="14.86" viewBox="0 -1408 1536 1536" preserveAspectRatio="none"><path transform="scale(1,-1)" fill="#d1d2d6" d="M896 992C896 1010 882 1024 864 1024H800C782 1024 768 1010 768 992V640H544C526 640 512 626 512 608V544C512 526 526 512 544 512H864C882 512 896 526 896 544ZM1312 640C1312 340 1068 96 768 96C468 96 224 340 224 640C224 940 468 1184 768 1184C1068 1184 1312 940 1312 640ZM1536 640C1536 1064 1192 1408 768 1408C344 1408 0 1064 0 640C0 216 344 -128 768 -128C1192 -128 1536 216 1536 640Z"/></svg>
<span style="left:833.64px;top:376px;font-size:13px;line-height:19px;color:#495057;letter-spacing:-0.109px;">$ 1,000.00</span>
<div style="left:901.7px;top:377.2px;width:89.3px;height:17.6px;border-radius:9px;background:#8fd19e"></div>
<span style="left:909.50px;top:377px;font-size:12px;line-height:18px;color:#1f2429;letter-spacing:-0.356px;-webkit-text-stroke:0.3px;">Purchase Or...</span>
<span style="left:993.60px;top:376px;font-size:13px;line-height:19px;color:#495057;letter-spacing:-0.714px;">...</span>
</article>
<article class="o_data_row" role="row">
<div style="left:16px;top:411px;width:12px;height:12px;box-sizing:border-box;border:1px solid #767a83;border-radius:2px;background:#fff"></div>
<svg style="left:43.2px;top:406.01px;" width="16.25" height="15.50" viewBox="0 -1504 1664 1587" preserveAspectRatio="none"><path transform="scale(1,-1)" fill="#74787f" d="M1137 532 1209 111 832 310 454 111 527 532 221 829 643 891 832 1273 1021 891 1443 829ZM1664 889C1664 919 1632 931 1608 935L1106 1008L881 1463C872 1482 855 1504 832 1504C809 1504 792 1482 783 1463L558 1008L56 935C31 931 0 919 0 889C0 871 13 854 25 841L389 487L303 -13C302 -20 301 -26 301 -33C301 -59 314 -83 343 -83C357 -83 370 -78 383 -71L832 165L1281 -71C1293 -78 1307 -83 1321 -83C1350 -83 1362 -60 1362 -33C1362 -26 1362 -20 1361 -13L1275 487L1638 841C1651 854 1664 871 1664 889Z"/></svg>
<span style="left:68.50px;top:407px;font-size:13px;line-height:19px;color:#495057;letter-spacing:0.070px;-webkit-text-stroke:0.28px;font-kerning:none;">P00015</span>
<span style="left:144.20px;top:407px;font-size:13px;line-height:19px;color:#495057;letter-spacing:-0.145px;">Wood Corner</span>
<span style="left:253.00px;top:407px;font-size:13px;line-height:19px;color:#495057;letter-spacing:-0.181px;">Cybrosys Techn...</span>
<svg style="left:582.4px;top:410.58px;" width="17.33" height="13.62" viewBox="0 -1408 1792 1408" preserveAspectRatio="none"><path transform="scale(1,-1)" fill="#128a14" d="M1024 128V256H1664V128ZM640 640V768H1664V640ZM1280 1152V1280H1664V1152ZM1792 320C1792 355 1763 384 1728 384H64C29 384 0 355 0 320V64C0 29 29 0 64 0H1728C1763 0 1792 29 1792 64ZM1792 832C1792 867 1763 896 1728 896H64C29 896 0 867 0 832V576C0 541 29 512 64 512H1728C1763 512 1792 541 1792 576ZM1792 1344C1792 1379 1763 1408 1728 1408H64C29 1408 0 1379 0 1344V1088C0 1053 29 1024 64 1024H1728C1763 1024 1792 1053 1792 1088Z"/></svg>
<span style="left:605.20px;top:407px;font-size:13px;line-height:19px;color:#495057;letter-spacing:-0.246px;">Send shipp...</span>
<span style="left:850.81px;top:407px;font-size:13px;line-height:19px;color:#495057;letter-spacing:-0.027px;">$ 46.00</span>
<div style="left:901.7px;top:408.2px;width:89.3px;height:17.6px;border-radius:9px;background:#8fd19e"></div>
<span style="left:909.50px;top:408px;font-size:12px;line-height:18px;color:#1f2429;letter-spacing:-0.356px;-webkit-text-stroke:0.3px;">Purchase Or...</span>
<span style="left:993.60px;top:407px;font-size:13px;line-height:19px;color:#495057;letter-spacing:-0.714px;">...</span>
</article>
<article class="o_data_row" role="row">
<div style="left:16px;top:442px;width:12px;height:12px;box-sizing:border-box;border:1px solid #767a83;border-radius:2px;background:#fff"></div>
<svg style="left:43.2px;top:437.01px;" width="16.25" height="15.50" viewBox="0 -1504 1664 1587" preserveAspectRatio="none"><path transform="scale(1,-1)" fill="#74787f" d="M1137 532 1209 111 832 310 454 111 527 532 221 829 643 891 832 1273 1021 891 1443 829ZM1664 889C1664 919 1632 931 1608 935L1106 1008L881 1463C872 1482 855 1504 832 1504C809 1504 792 1482 783 1463L558 1008L56 935C31 931 0 919 0 889C0 871 13 854 25 841L389 487L303 -13C302 -20 301 -26 301 -33C301 -59 314 -83 343 -83C357 -83 370 -78 383 -71L832 165L1281 -71C1293 -78 1307 -83 1321 -83C1350 -83 1362 -60 1362 -33C1362 -26 1362 -20 1361 -13L1275 487L1638 841C1651 854 1664 871 1664 889Z"/></svg>
<span style="left:68.50px;top:438px;font-size:13px;line-height:19px;color:#495057;letter-spacing:0.070px;-webkit-text-stroke:0.28px;font-kerning:none;">P00014</span>
<span style="left:144.20px;top:438px;font-size:13px;line-height:19px;color:#495057;letter-spacing:-0.145px;">Wood Corner</span>
<span style="left:253.00px;top:438px;font-size:13px;line-height:19px;color:#495057;letter-spacing:-0.181px;">Cybrosys Techn...</span>
<svg style="left:583.6px;top:441.48px;" width="14.85" height="14.86" viewBox="0 -1408 1536 1536" preserveAspectRatio="none"><path transform="scale(1,-1)" fill="#d1d2d6" d="M896 992C896 1010 882 1024 864 1024H800C782 1024 768 1010 768 992V640H544C526 640 512 626 512 608V544C512 526 526 512 544 512H864C882 512 896 526 896 544ZM1312 640C1312 340 1068 96 768 96C468 96 224 340 224 640C224 940 468 1184 768 1184C1068 1184 1312 940 1312 640ZM1536 640C1536 1064 1192 1408 768 1408C344 1408 0 1064 0 640C0 216 344 -128 768 -128C1192 -128 1536 216 1536 640Z"/></svg>
<span style="left:843.50px;top:438px;font-size:13px;line-height:19px;color:#495057;letter-spacing:-0.014px;">$ 276.00</span>
<div style="left:901.7px;top:439.2px;width:89.3px;height:17.6px;border-radius:9px;background:#8fd19e"></div>
<span style="left:909.50px;top:439px;font-size:12px;line-height:18px;color:#1f2429;letter-spacing:-0.356px;-webkit-text-stroke:0.3px;">Purchase Or...</span>
<span style="left:993.60px;top:438px;font-size:13px;line-height:19px;color:#495057;letter-spacing:-0.714px;">...</span>
</article>
<article class="o_data_row" role="row">
<div style="left:16px;top:473px;width:12px;height:12px;box-sizing:border-box;border:1px solid #767a83;border-radius:2px;background:#fff"></div>
<svg style="left:43.2px;top:468.01px;" width="16.25" height="15.50" viewBox="0 -1504 1664 1587" preserveAspectRatio="none"><path transform="scale(1,-1)" fill="#74787f" d="M1137 532 1209 111 832 310 454 111 527 532 221 829 643 891 832 1273 1021 891 1443 829ZM1664 889C1664 919 1632 931 1608 935L1106 1008L881 1463C872 1482 855 1504 832 1504C809 1504 792 1482 783 1463L558 1008L56 935C31 931 0 919 0 889C0 871 13 854 25 841L389 487L303 -13C302 -20 301 -26 301 -33C301 -59 314 -83 343 -83C357 -83 370 -78 383 -71L832 165L1281 -71C1293 -78 1307 -83 1321 -83C1350 -83 1362 -60 1362 -33C1362 -26 1362 -20 1361 -13L1275 487L1638 841C1651 854 1664 871 1664 889Z"/></svg>
<span style="left:68.50px;top:469px;font-size:13px;line-height:19px;color:#495057;letter-spacing:0.070px;-webkit-text-stroke:0.28px;font-kerning:none;">P00013</span>
<span style="left:144.20px;top:469px;font-size:13px;line-height:19px;color:#495057;letter-spacing:-0.168px;">Ready Mat</span>
<span style="left:253.00px;top:469px;font-size:13px;line-height:19px;color:#495057;letter-spacing:-0.181px;">Cybrosys Techn...</span>
<svg style="left:361.7px;top:469.6px" width="19" height="19" viewBox="0 0 26 26"><defs><clipPath id="av5"><circle cx="13" cy="13" r="13"/></clipPath><filter id="fav5" x="-30%" y="-30%" width="160%" height="160%"><feGaussianBlur stdDeviation="1"/></filter><filter id="gav5" x="-30%" y="-30%" width="160%" height="160%"><feGaussianBlur stdDeviation="0.5"/></filter><filter id="nav5" x="0" y="0" width="100%" height="100%"><feTurbulence type="fractalNoise" baseFrequency="0.55" numOctaves="2" seed="7" result="t"/><feColorMatrix in="t" type="matrix" values="0 0 0 0 0.2  0 0 0 0 0.12  0 0 0 0 0.08  1.6 0 0 0 -0.62"/></filter></defs><g clip-path="url(#av5)"><rect width="26" height="26" fill="#86653f"/><g filter="url(#fav5)"><rect x="-3" y="-3" width="32" height="32" fill="#86653f"/><rect x="19.5" y="3" width="9" height="20" fill="#977650"/><rect x="-2" y="9" width="7" height="10" fill="#94714b"/><ellipse cx="13.6" cy="5" rx="7.6" ry="4" fill="#241c26"/><ellipse cx="12.6" cy="14.4" rx="6.1" ry="9" fill="#c19987"/><ellipse cx="13" cy="8.8" rx="4.6" ry="2.2" fill="#d8c4be"/><ellipse cx="16" cy="26.5" rx="7" ry="3.4" fill="#9aa4b6"/></g><g filter="url(#gav5)"><ellipse cx="9.8" cy="12.6" rx="2.5" ry="1.5" fill="#5a3d33" opacity=".8"/><ellipse cx="15.6" cy="12.6" rx="2.5" ry="1.5" fill="#5a3d33" opacity=".8"/><ellipse cx="12.8" cy="16" rx="1.5" ry="1.5" fill="#b27355" opacity=".7"/><ellipse cx="12.8" cy="18.8" rx="2.6" ry="1" fill="#efe3de" opacity=".85"/><ellipse cx="12.8" cy="21.4" rx="3.2" ry="1.2" fill="#a87c68" opacity=".7"/></g><rect width="26" height="26" filter="url(#nav5)"/></g></svg>
<span style="left:388.40px;top:469px;font-size:13px;line-height:19px;color:#495057;letter-spacing:0.209px;width:78.3px;overflow:hidden;">Mitchell Admin</span>
<svg style="left:583.6px;top:472.48px;" width="14.85" height="14.86" viewBox="0 -1408 1536 1536" preserveAspectRatio="none"><path transform="scale(1,-1)" fill="#d1d2d6" d="M896 992C896 1010 882 1024 864 1024H800C782 1024 768 1010 768 992V640H544C526 640 512 626 512 608V544C512 526 526 512 544 512H864C882 512 896 526 896 544ZM1312 640C1312 340 1068 96 768 96C468 96 224 340 224 640C224 940 468 1184 768 1184C1068 1184 1312 940 1312 640ZM1536 640C1536 1064 1192 1408 768 1408C344 1408 0 1064 0 640C0 216 344 -128 768 -128C1192 -128 1536 216 1536 640Z"/></svg>
<span style="left:833.64px;top:469px;font-size:13px;line-height:19px;color:#495057;letter-spacing:-0.109px;">$ 5,736.00</span>
<div style="left:901.7px;top:470.2px;width:89.3px;height:17.6px;border-radius:9px;background:#8fd19e"></div>
<span style="left:909.50px;top:470px;font-size:12px;line-height:18px;color:#1f2429;letter-spacing:-0.356px;-webkit-text-stroke:0.3px;">Purchase Or...</span>
<span style="left:993.60px;top:469px;font-size:13px;line-height:19px;color:#495057;letter-spacing:-0.714px;">...</span>
</article>
<article class="o_data_row" role="row">
<div style="left:16px;top:504px;width:12px;height:12px;box-sizing:border-box;border:1px solid #767a83;border-radius:2px;background:#fff"></div>
<svg style="left:43.2px;top:499.01px;" width="16.25" height="15.50" viewBox="0 -1504 1664 1587" preserveAspectRatio="none"><path transform="scale(1,-1)" fill="#74787f" d="M1137 532 1209 111 832 310 454 111 527 532 221 829 643 891 832 1273 1021 891 1443 829ZM1664 889C1664 919 1632 931 1608 935L1106 1008L881 1463C872 1482 855 1504 832 1504C809 1504 792 1482 783 1463L558 1008L56 935C31 931 0 919 0 889C0 871 13 854 25 841L389 487L303 -13C302 -20 301 -26 301 -33C301 -59 314 -83 343 -83C357 -83 370 -78 383 -71L832 165L1281 -71C1293 -78 1307 -83 1321 -83C1350 -83 1362 -60 1362 -33C1362 -26 1362 -20 1361 -13L1275 487L1638 841C1651 854 1664 871 1664 889Z"/></svg>
<span style="left:68.50px;top:500px;font-size:13px;line-height:19px;color:#1479b1;letter-spacing:0.070px;-webkit-text-stroke:0.28px;font-kerning:none;">P00012</span>
<span style="left:144.20px;top:500px;font-size:13px;line-height:19px;color:#1479b1;letter-spacing:-0.145px;">Wood Corner</span>
<span style="left:253.00px;top:500px;font-size:13px;line-height:19px;color:#1479b1;letter-spacing:-0.181px;">Cybrosys Techn...</span>
<svg style="left:361.7px;top:500.6px" width="19" height="19" viewBox="0 0 26 26"><defs><clipPath id="av6"><circle cx="13" cy="13" r="13"/></clipPath><filter id="fav6" x="-30%" y="-30%" width="160%" height="160%"><feGaussianBlur stdDeviation="1"/></filter><filter id="gav6" x="-30%" y="-30%" width="160%" height="160%"><feGaussianBlur stdDeviation="0.5"/></filter><filter id="nav6" x="0" y="0" width="100%" height="100%"><feTurbulence type="fractalNoise" baseFrequency="0.55" numOctaves="2" seed="7" result="t"/><feColorMatrix in="t" type="matrix" values="0 0 0 0 0.2  0 0 0 0 0.12  0 0 0 0 0.08  1.6 0 0 0 -0.62"/></filter></defs><g clip-path="url(#av6)"><rect width="26" height="26" fill="#86653f"/><g filter="url(#fav6)"><rect x="-3" y="-3" width="32" height="32" fill="#86653f"/><rect x="19.5" y="3" width="9" height="20" fill="#977650"/><rect x="-2" y="9" width="7" height="10" fill="#94714b"/><ellipse cx="13.6" cy="5" rx="7.6" ry="4" fill="#241c26"/><ellipse cx="12.6" cy="14.4" rx="6.1" ry="9" fill="#c19987"/><ellipse cx="13" cy="8.8" rx="4.6" ry="2.2" fill="#d8c4be"/><ellipse cx="16" cy="26.5" rx="7" ry="3.4" fill="#9aa4b6"/></g><g filter="url(#gav6)"><ellipse cx="9.8" cy="12.6" rx="2.5" ry="1.5" fill="#5a3d33" opacity=".8"/><ellipse cx="15.6" cy="12.6" rx="2.5" ry="1.5" fill="#5a3d33" opacity=".8"/><ellipse cx="12.8" cy="16" rx="1.5" ry="1.5" fill="#b27355" opacity=".7"/><ellipse cx="12.8" cy="18.8" rx="2.6" ry="1" fill="#efe3de" opacity=".85"/><ellipse cx="12.8" cy="21.4" rx="3.2" ry="1.2" fill="#a87c68" opacity=".7"/></g><rect width="26" height="26" filter="url(#nav6)"/></g></svg>
<span style="left:388.40px;top:500px;font-size:13px;line-height:19px;color:#1479b1;letter-spacing:0.209px;width:78.3px;overflow:hidden;">Mitchell Admin</span>
<span style="left:471.00px;top:500px;font-size:13px;line-height:19px;color:#d23f3a;letter-spacing:-0.050px;">Yesterday</span>
<svg style="left:583.6px;top:503.48px;" width="14.85" height="14.86" viewBox="0 -1408 1536 1536" preserveAspectRatio="none"><path transform="scale(1,-1)" fill="#d1d2d6" d="M896 992C896 1010 882 1024 864 1024H800C782 1024 768 1010 768 992V640H544C526 640 512 626 512 608V544C512 526 526 512 544 512H864C882 512 896 526 896 544ZM1312 640C1312 340 1068 96 768 96C468 96 224 340 224 640C224 940 468 1184 768 1184C1068 1184 1312 940 1312 640ZM1536 640C1536 1064 1192 1408 768 1408C344 1408 0 1064 0 640C0 216 344 -128 768 -128C1192 -128 1536 216 1536 640Z"/></svg>
<span style="left:843.50px;top:500px;font-size:13px;line-height:19px;color:#1479b1;letter-spacing:-0.014px;">$ 150.00</span>
<div style="left:901.7px;top:501.2px;width:37.2px;height:17.6px;border-radius:9px;background:#86cfda"></div>
<span style="left:909.50px;top:502px;font-size:11.2px;line-height:16px;color:#1f2429;letter-spacing:-0.589px;-webkit-text-stroke:0.28px;">RFQ</span>
</article>
<article class="o_data_row" role="row">
<div style="left:16px;top:535px;width:12px;height:12px;box-sizing:border-box;border:1px solid #767a83;border-radius:2px;background:#fff"></div>
<svg style="left:43.2px;top:530.01px;" width="16.25" height="15.50" viewBox="0 -1504 1664 1587" preserveAspectRatio="none"><path transform="scale(1,-1)" fill="#74787f" d="M1137 532 1209 111 832 310 454 111 527 532 221 829 643 891 832 1273 1021 891 1443 829ZM1664 889C1664 919 1632 931 1608 935L1106 1008L881 1463C872 1482 855 1504 832 1504C809 1504 792 1482 783 1463L558 1008L56 935C31 931 0 919 0 889C0 871 13 854 25 841L389 487L303 -13C302 -20 301 -26 301 -33C301 -59 314 -83 343 -83C357 -83 370 -78 383 -71L832 165L1281 -71C1293 -78 1307 -83 1321 -83C1350 -83 1362 -60 1362 -33C1362 -26 1362 -20 1361 -13L1275 487L1638 841C1651 854 1664 871 1664 889Z"/></svg>
<span style="left:68.50px;top:531px;font-size:13px;line-height:19px;color:#1479b1;letter-spacing:0.070px;-webkit-text-stroke:0.28px;font-kerning:none;">P00011</span>
<span style="left:144.20px;top:531px;font-size:13px;line-height:19px;color:#1479b1;letter-spacing:-0.168px;">Ready Mat</span>
<span style="left:253.00px;top:531px;font-size:13px;line-height:19px;color:#1479b1;letter-spacing:-0.181px;">Cybrosys Techn...</span>
<svg style="left:361.7px;top:531.6px" width="19" height="19" viewBox="0 0 26 26"><defs><clipPath id="av7"><circle cx="13" cy="13" r="13"/></clipPath><filter id="fav7" x="-30%" y="-30%" width="160%" height="160%"><feGaussianBlur stdDeviation="1"/></filter><filter id="gav7" x="-30%" y="-30%" width="160%" height="160%"><feGaussianBlur stdDeviation="0.5"/></filter><filter id="nav7" x="0" y="0" width="100%" height="100%"><feTurbulence type="fractalNoise" baseFrequency="0.55" numOctaves="2" seed="7" result="t"/><feColorMatrix in="t" type="matrix" values="0 0 0 0 0.2  0 0 0 0 0.12  0 0 0 0 0.08  1.6 0 0 0 -0.62"/></filter></defs><g clip-path="url(#av7)"><rect width="26" height="26" fill="#86653f"/><g filter="url(#fav7)"><rect x="-3" y="-3" width="32" height="32" fill="#86653f"/><rect x="19.5" y="3" width="9" height="20" fill="#977650"/><rect x="-2" y="9" width="7" height="10" fill="#94714b"/><ellipse cx="13.6" cy="5" rx="7.6" ry="4" fill="#241c26"/><ellipse cx="12.6" cy="14.4" rx="6.1" ry="9" fill="#c19987"/><ellipse cx="13" cy="8.8" rx="4.6" ry="2.2" fill="#d8c4be"/><ellipse cx="16" cy="26.5" rx="7" ry="3.4" fill="#9aa4b6"/></g><g filter="url(#gav7)"><ellipse cx="9.8" cy="12.6" rx="2.5" ry="1.5" fill="#5a3d33" opacity=".8"/><ellipse cx="15.6" cy="12.6" rx="2.5" ry="1.5" fill="#5a3d33" opacity=".8"/><ellipse cx="12.8" cy="16" rx="1.5" ry="1.5" fill="#b27355" opacity=".7"/><ellipse cx="12.8" cy="18.8" rx="2.6" ry="1" fill="#efe3de" opacity=".85"/><ellipse cx="12.8" cy="21.4" rx="3.2" ry="1.2" fill="#a87c68" opacity=".7"/></g><rect width="26" height="26" filter="url(#nav7)"/></g></svg>
<span style="left:388.40px;top:531px;font-size:13px;line-height:19px;color:#1479b1;letter-spacing:0.209px;width:78.3px;overflow:hidden;">Mitchell Admin</span>
<span style="left:471.00px;top:531px;font-size:13px;line-height:19px;color:#d23f3a;letter-spacing:-0.050px;">Yesterday</span>
<svg style="left:583.6px;top:534.48px;" width="14.85" height="14.86" viewBox="0 -1408 1536 1536" preserveAspectRatio="none"><path transform="scale(1,-1)" fill="#d1d2d6" d="M896 992C896 1010 882 1024 864 1024H800C782 1024 768 1010 768 992V640H544C526 640 512 626 512 608V544C512 526 526 512 544 512H864C882 512 896 526 896 544ZM1312 640C1312 340 1068 96 768 96C468 96 224 340 224 640C224 940 468 1184 768 1184C1068 1184 1312 940 1312 640ZM1536 640C1536 1064 1192 1408 768 1408C344 1408 0 1064 0 640C0 216 344 -128 768 -128C1192 -128 1536 216 1536 640Z"/></svg>
<span style="left:843.50px;top:531px;font-size:13px;line-height:19px;color:#1479b1;letter-spacing:-0.014px;">$ 300.00</span>
<div style="left:901.7px;top:532.2px;width:37.2px;height:17.6px;border-radius:9px;background:#86cfda"></div>
<span style="left:909.50px;top:533px;font-size:11.2px;line-height:16px;color:#1f2429;letter-spacing:-0.589px;-webkit-text-stroke:0.28px;">RFQ</span>
</article>
<article class="o_data_row" role="row">
<div style="left:16px;top:566px;width:12px;height:12px;box-sizing:border-box;border:1px solid #767a83;border-radius:2px;background:#fff"></div>
<svg style="left:43.2px;top:561.01px;" width="16.25" height="15.50" viewBox="0 -1504 1664 1587" preserveAspectRatio="none"><path transform="scale(1,-1)" fill="#74787f" d="M1137 532 1209 111 832 310 454 111 527 532 221 829 643 891 832 1273 1021 891 1443 829ZM1664 889C1664 919 1632 931 1608 935L1106 1008L881 1463C872 1482 855 1504 832 1504C809 1504 792 1482 783 1463L558 1008L56 935C31 931 0 919 0 889C0 871 13 854 25 841L389 487L303 -13C302 -20 301 -26 301 -33C301 -59 314 -83 343 -83C357 -83 370 -78 383 -71L832 165L1281 -71C1293 -78 1307 -83 1321 -83C1350 -83 1362 -60 1362 -33C1362 -26 1362 -20 1361 -13L1275 487L1638 841C1651 854 1664 871 1664 889Z"/></svg>
<span style="left:68.50px;top:562px;font-size:13px;line-height:19px;color:#495057;letter-spacing:0.070px;-webkit-text-stroke:0.28px;font-kerning:none;">P00010</span>
<span style="left:144.20px;top:562px;font-size:13px;line-height:19px;color:#495057;letter-spacing:-0.016px;">Azure Interior</span>
<span style="left:253.00px;top:562px;font-size:13px;line-height:19px;color:#495057;letter-spacing:-0.181px;">Cybrosys Techn...</span>
<svg style="left:361.7px;top:562.6px" width="19" height="19" viewBox="0 0 26 26"><defs><clipPath id="av8"><circle cx="13" cy="13" r="13"/></clipPath><filter id="fav8" x="-30%" y="-30%" width="160%" height="160%"><feGaussianBlur stdDeviation="1"/></filter><filter id="gav8" x="-30%" y="-30%" width="160%" height="160%"><feGaussianBlur stdDeviation="0.5"/></filter><filter id="nav8" x="0" y="0" width="100%" height="100%"><feTurbulence type="fractalNoise" baseFrequency="0.55" numOctaves="2" seed="7" result="t"/><feColorMatrix in="t" type="matrix" values="0 0 0 0 0.2  0 0 0 0 0.12  0 0 0 0 0.08  1.6 0 0 0 -0.62"/></filter></defs><g clip-path="url(#av8)"><rect width="26" height="26" fill="#86653f"/><g filter="url(#fav8)"><rect x="-3" y="-3" width="32" height="32" fill="#86653f"/><rect x="19.5" y="3" width="9" height="20" fill="#977650"/><rect x="-2" y="9" width="7" height="10" fill="#94714b"/><ellipse cx="13.6" cy="5" rx="7.6" ry="4" fill="#241c26"/><ellipse cx="12.6" cy="14.4" rx="6.1" ry="9" fill="#c19987"/><ellipse cx="13" cy="8.8" rx="4.6" ry="2.2" fill="#d8c4be"/><ellipse cx="16" cy="26.5" rx="7" ry="3.4" fill="#9aa4b6"/></g><g filter="url(#gav8)"><ellipse cx="9.8" cy="12.6" rx="2.5" ry="1.5" fill="#5a3d33" opacity=".8"/><ellipse cx="15.6" cy="12.6" rx="2.5" ry="1.5" fill="#5a3d33" opacity=".8"/><ellipse cx="12.8" cy="16" rx="1.5" ry="1.5" fill="#b27355" opacity=".7"/><ellipse cx="12.8" cy="18.8" rx="2.6" ry="1" fill="#efe3de" opacity=".85"/><ellipse cx="12.8" cy="21.4" rx="3.2" ry="1.2" fill="#a87c68" opacity=".7"/></g><rect width="26" height="26" filter="url(#nav8)"/></g></svg>
<span style="left:388.40px;top:562px;font-size:13px;line-height:19px;color:#495057;letter-spacing:0.209px;width:78.3px;overflow:hidden;">Mitchell Admin</span>
<svg style="left:583.6px;top:565.48px;" width="14.85" height="14.86" viewBox="0 -1408 1536 1536" preserveAspectRatio="none"><path transform="scale(1,-1)" fill="#d1d2d6" d="M896 992C896 1010 882 1024 864 1024H800C782 1024 768 1010 768 992V640H544C526 640 512 626 512 608V544C512 526 526 512 544 512H864C882 512 896 526 896 544ZM1312 640C1312 340 1068 96 768 96C468 96 224 340 224 640C224 940 468 1184 768 1184C1068 1184 1312 940 1312 640ZM1536 640C1536 1064 1192 1408 768 1408C344 1408 0 1064 0 640C0 216 344 -128 768 -128C1192 -128 1536 216 1536 640Z"/></svg>
<span style="left:833.64px;top:562px;font-size:13px;line-height:19px;color:#495057;letter-spacing:-0.109px;">$ 2,505.00</span>
<div style="left:901.7px;top:563.2px;width:89.3px;height:17.6px;border-radius:9px;background:#8fd19e"></div>
<span style="left:909.50px;top:563px;font-size:12px;line-height:18px;color:#1f2429;letter-spacing:-0.356px;-webkit-text-stroke:0.3px;">Purchase Or...</span>
<span style="left:993.60px;top:562px;font-size:13px;line-height:19px;color:#495057;letter-spacing:-0.714px;">...</span>
</article>
<article class="o_data_row" role="row">
<div style="left:16px;top:597px;width:12px;height:12px;box-sizing:border-box;border:1px solid #767a83;border-radius:2px;background:#fff"></div>
<svg style="left:43.2px;top:592.01px;" width="16.25" height="15.50" viewBox="0 -1504 1664 1587" preserveAspectRatio="none"><path transform="scale(1,-1)" fill="#74787f" d="M1137 532 1209 111 832 310 454 111 527 532 221 829 643 891 832 1273 1021 891 1443 829ZM1664 889C1664 919 1632 931 1608 935L1106 1008L881 1463C872 1482 855 1504 832 1504C809 1504 792 1482 783 1463L558 1008L56 935C31 931 0 919 0 889C0 871 13 854 25 841L389 487L303 -13C302 -20 301 -26 301 -33C301 -59 314 -83 343 -83C357 -83 370 -78 383 -71L832 165L1281 -71C1293 -78 1307 -83 1321 -83C1350 -83 1362 -60 1362 -33C1362 -26 1362 -20 1361 -13L1275 487L1638 841C1651 854 1664 871 1664 889Z"/></svg>
<span style="left:68.50px;top:593px;font-size:13px;line-height:19px;color:#495057;letter-spacing:0.070px;-webkit-text-stroke:0.28px;font-kerning:none;">P00009</span>
<span style="left:144.20px;top:593px;font-size:13px;line-height:19px;color:#495057;letter-spacing:-0.086px;">Gemini Furniture</span>
<span style="left:253.00px;top:593px;font-size:13px;line-height:19px;color:#495057;letter-spacing:-0.181px;">Cybrosys Techn...</span>
<svg style="left:361.7px;top:593.6px" width="19" height="19" viewBox="0 0 26 26"><defs><clipPath id="av9"><circle cx="13" cy="13" r="13"/></clipPath><filter id="fav9" x="-30%" y="-30%" width="160%" height="160%"><feGaussianBlur stdDeviation="1"/></filter><filter id="gav9" x="-30%" y="-30%" width="160%" height="160%"><feGaussianBlur stdDeviation="0.5"/></filter><filter id="nav9" x="0" y="0" width="100%" height="100%"><feTurbulence type="fractalNoise" baseFrequency="0.55" numOctaves="2" seed="7" result="t"/><feColorMatrix in="t" type="matrix" values="0 0 0 0 0.2  0 0 0 0 0.12  0 0 0 0 0.08  1.6 0 0 0 -0.62"/></filter></defs><g clip-path="url(#av9)"><rect width="26" height="26" fill="#86653f"/><g filter="url(#fav9)"><rect x="-3" y="-3" width="32" height="32" fill="#86653f"/><rect x="19.5" y="3" width="9" height="20" fill="#977650"/><rect x="-2" y="9" width="7" height="10" fill="#94714b"/><ellipse cx="13.6" cy="5" rx="7.6" ry="4" fill="#241c26"/><ellipse cx="12.6" cy="14.4" rx="6.1" ry="9" fill="#c19987"/><ellipse cx="13" cy="8.8" rx="4.6" ry="2.2" fill="#d8c4be"/><ellipse cx="16" cy="26.5" rx="7" ry="3.4" fill="#9aa4b6"/></g><g filter="url(#gav9)"><ellipse cx="9.8" cy="12.6" rx="2.5" ry="1.5" fill="#5a3d33" opacity=".8"/><ellipse cx="15.6" cy="12.6" rx="2.5" ry="1.5" fill="#5a3d33" opacity=".8"/><ellipse cx="12.8" cy="16" rx="1.5" ry="1.5" fill="#b27355" opacity=".7"/><ellipse cx="12.8" cy="18.8" rx="2.6" ry="1" fill="#efe3de" opacity=".85"/><ellipse cx="12.8" cy="21.4" rx="3.2" ry="1.2" fill="#a87c68" opacity=".7"/></g><rect width="26" height="26" filter="url(#nav9)"/></g></svg>
<span style="left:388.40px;top:593px;font-size:13px;line-height:19px;color:#495057;letter-spacing:0.209px;width:78.3px;overflow:hidden;">Mitchell Admin</span>
<svg style="left:583.6px;top:596.48px;" width="14.85" height="14.86" viewBox="0 -1408 1536 1536" preserveAspectRatio="none"><path transform="scale(1,-1)" fill="#d1d2d6" d="M896 992C896 1010 882 1024 864 1024H800C782 1024 768 1010 768 992V640H544C526 640 512 626 512 608V544C512 526 526 512 544 512H864C882 512 896 526 896 544ZM1312 640C1312 340 1068 96 768 96C468 96 224 340 224 640C224 940 468 1184 768 1184C1068 1184 1312 940 1312 640ZM1536 640C1536 1064 1192 1408 768 1408C344 1408 0 1064 0 640C0 216 344 -128 768 -128C1192 -128 1536 216 1536 640Z"/></svg>
<span style="left:826.33px;top:593px;font-size:13px;line-height:19px;color:#495057;letter-spacing:-0.092px;">$ 12,500.00</span>
<div style="left:901.7px;top:594.2px;width:89.3px;height:17.6px;border-radius:9px;background:#8fd19e"></div>
<span style="left:909.50px;top:594px;font-size:12px;line-height:18px;color:#1f2429;letter-spacing:-0.356px;-webkit-text-stroke:0.3px;">Purchase Or...</span>
<span style="left:993.60px;top:593px;font-size:13px;line-height:19px;color:#495057;letter-spacing:-0.714px;">...</span>
</article>
</section>
<aside class="scrollbar">
<div style="left:1007px;top:144px;width:16px;height:478px;background:#f1f1f1;"></div>
<div style="left:1009px;top:161px;width:13px;height:285px;background:#c1c1c1;"></div>
<svg style="left:1012px;top:151px" width="7" height="4" viewBox="0 0 7 4"><path d="M0 4 L3.5 0 L7 4 Z" fill="#a8a8a8"/></svg>
<svg style="left:1012px;top:617px" width="7" height="4" viewBox="0 0 7 4"><path d="M0 0 L3.5 4 L7 0 Z" fill="#505050"/></svg>
</aside>
</main>
</body></html>
